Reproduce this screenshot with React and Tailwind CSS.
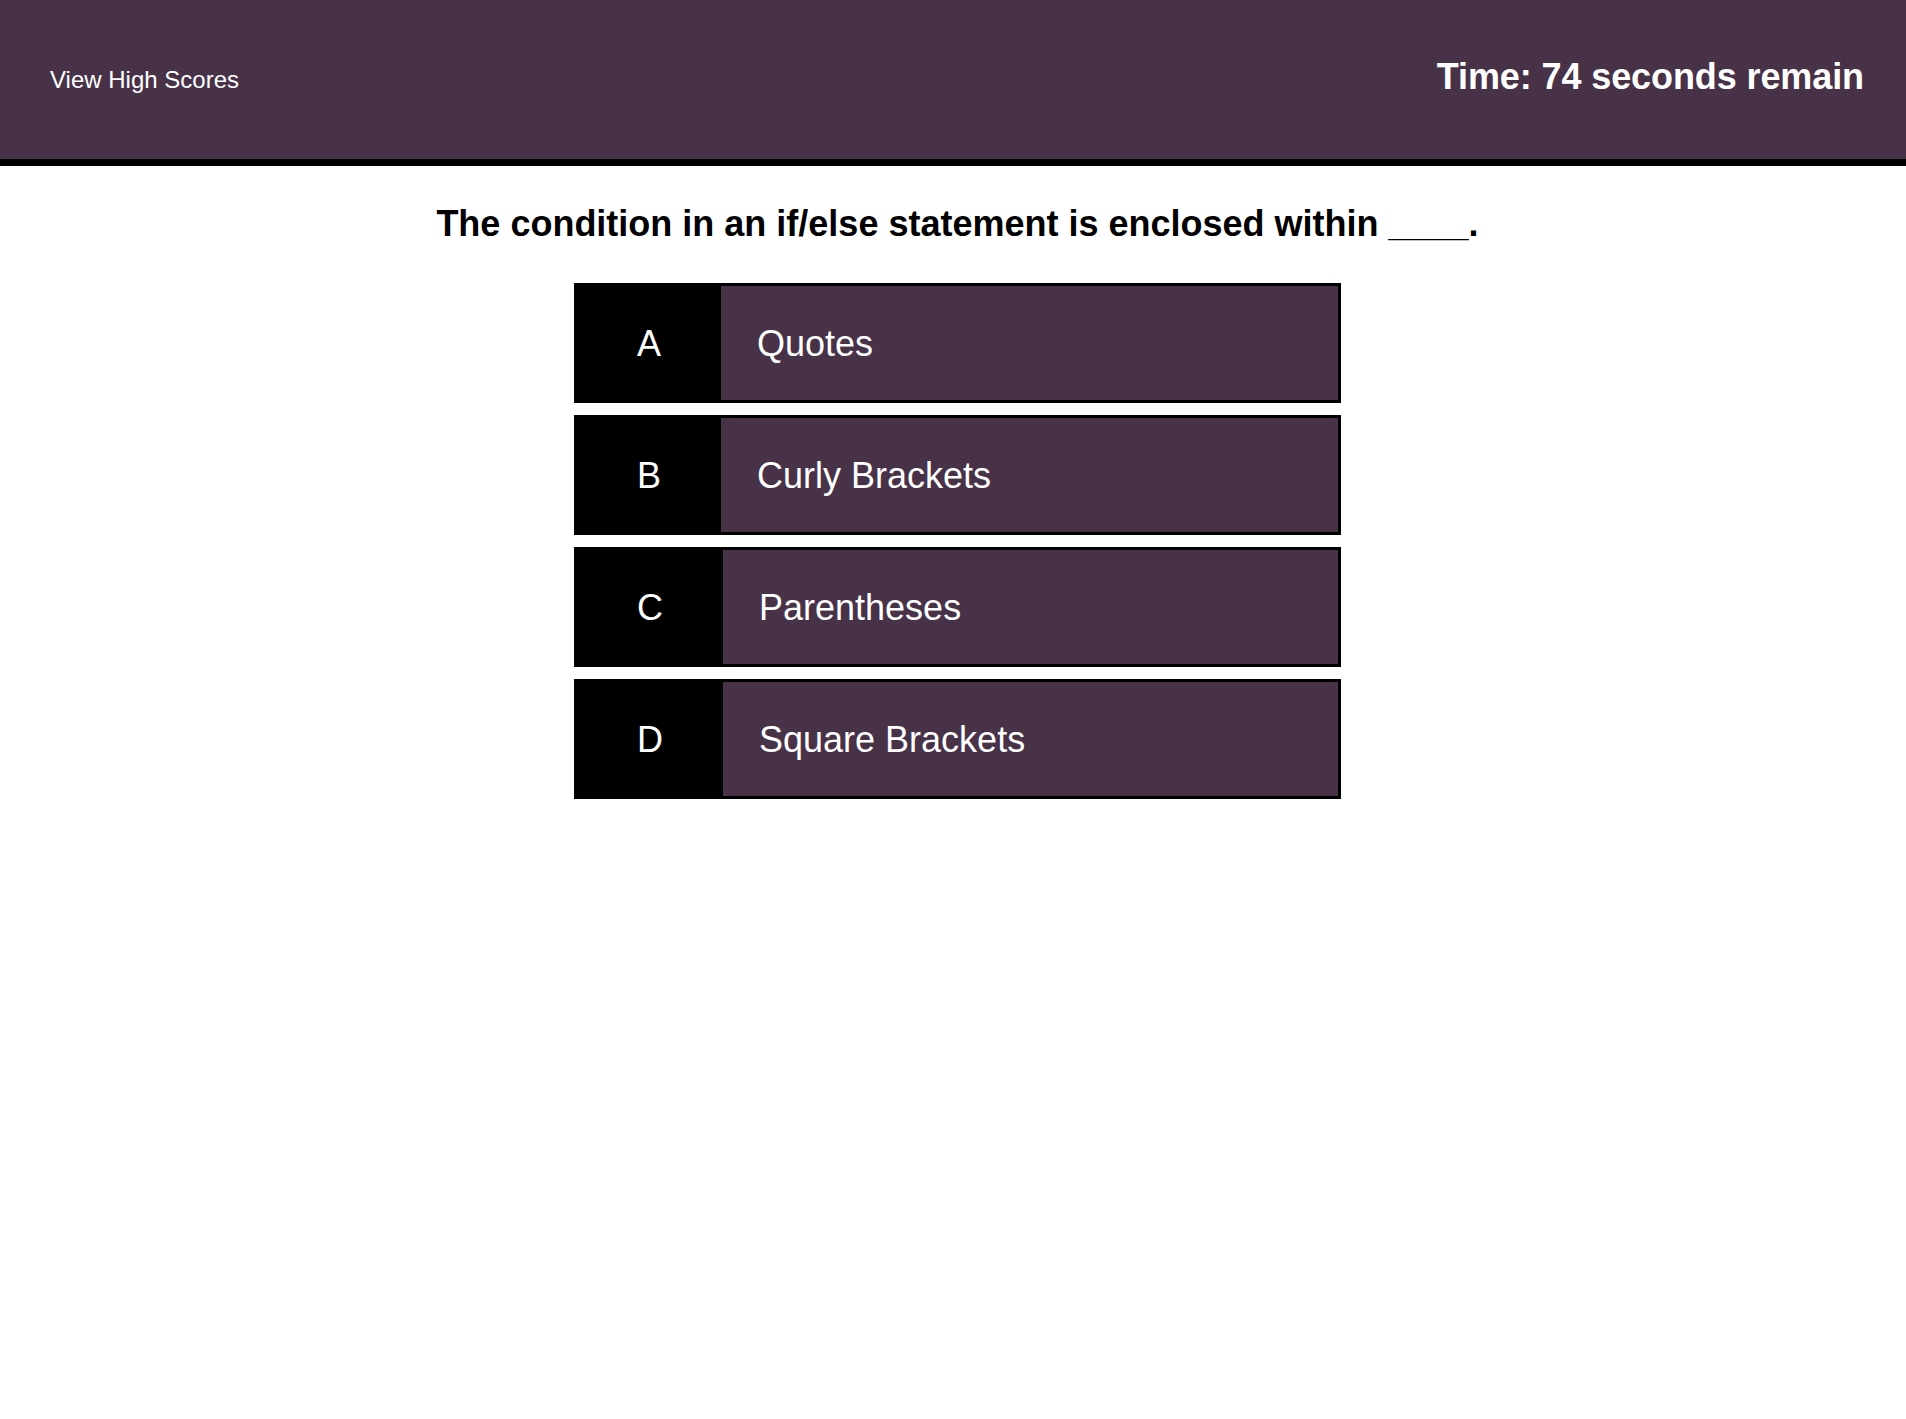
import React from "react";

const choices = [
  { letter: "A", text: "Quotes" },
  { letter: "B", text: "Curly Brackets" },
  { letter: "C", text: "Parentheses" },
  { letter: "D", text: "Square Brackets" },
];

const ChoiceRow = ({ letter, text }) => (
  <button
    type="button"
    className="flex h-[120px] w-full items-stretch border-[3px] border-black bg-[#483248] text-left text-[36px] leading-[1.15] text-white"
  >
    <span className="flex shrink-0 items-center bg-black px-[60px]">{letter}</span>
    <span className="flex items-center px-[36px]">{text}</span>
  </button>
);

export default function App() {
  const secondsLeft = 74;

  return (
    <div className="min-h-screen bg-white font-['Liberation_Sans',Arial,sans-serif]">
      <header className="flex h-[166px] items-center justify-between border-b-[7px] border-black bg-[#483248] pl-[50px] pr-[42px] text-white">
        <a href="#" className="text-[24px] leading-none">
          View High Scores
        </a>
        <p className="mb-[5px] text-[36px] font-bold leading-none tracking-[-0.1px]">
          Time: {secondsLeft} seconds remain
        </p>
      </header>

      <main className="flex flex-col items-center pl-[9px] pt-[37px]">
        <h2 className="text-[36px] font-bold leading-[1.15] text-black">
          The condition in an if/else statement is enclosed within ____.
        </h2>
        <div className="mt-[39px] flex w-[767px] flex-col gap-[12px]">
          {choices.map((c) => (
            <ChoiceRow key={c.letter} {...c} />
          ))}
        </div>
      </main>
    </div>
  );
}
